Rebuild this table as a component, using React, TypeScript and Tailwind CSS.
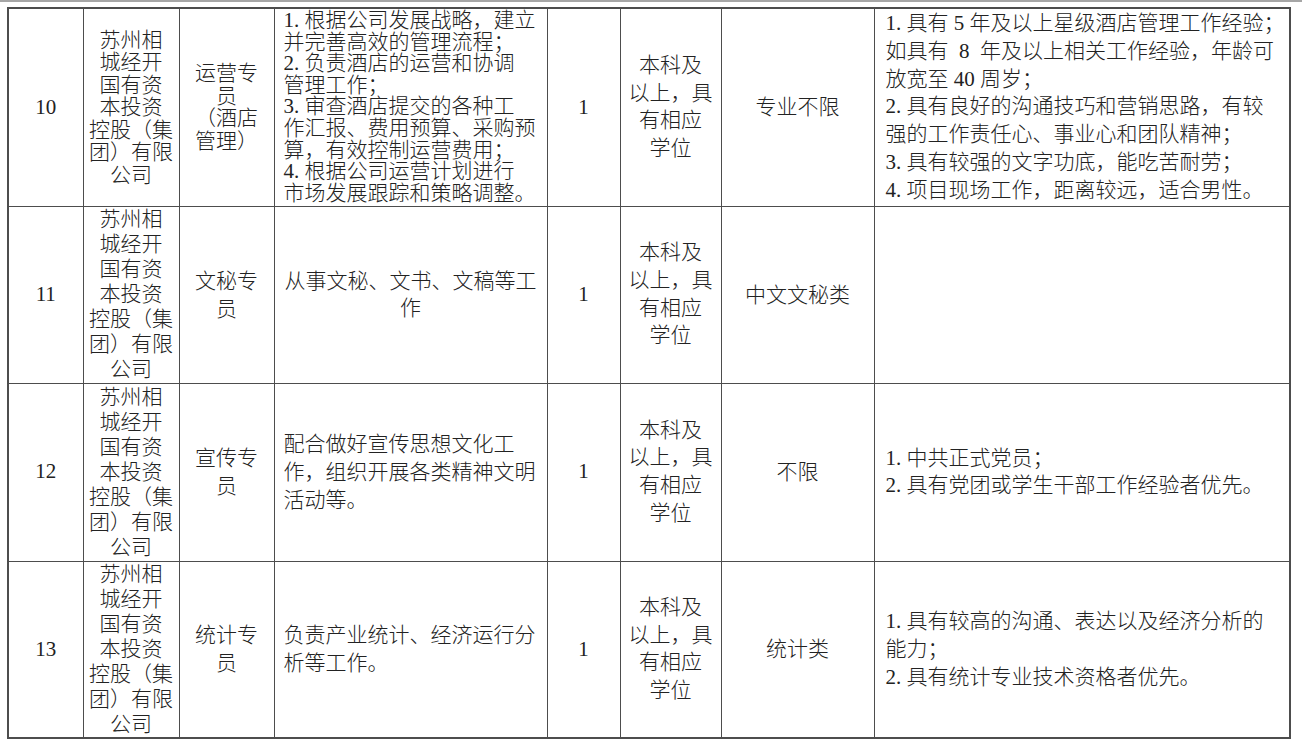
import React from "react";

type Cell = {
  lines: string[];
  lh: string; // line-height class
  align?: "left" | "center";
};

type Row = {
  no: string;
  h: string;
  company: Cell;
  post: Cell;
  duty: Cell;
  edu: Cell;
  major: Cell;
  req: Cell;
};

const COMPANY = ["苏州相", "城经开", "国有资", "本投资", "控股（集", "团）有限", "公司"];
const EDU = ["本科及", "以上，具", "有相应", "学位"];

const ROWS: Row[] = [
  {
    no: "10",
    h: "h-[198px]",
    company: { lines: COMPANY, lh: "leading-[22.5px]" },
    post: { lines: ["运营专", "员", "（酒店", "管理）"], lh: "leading-[22.7px]" },
    duty: {
      lines: [
        "1. 根据公司发展战略，建立",
        "并完善高效的管理流程；",
        "2. 负责酒店的运营和协调",
        "管理工作；",
        "3. 审查酒店提交的各种工",
        "作汇报、费用预算、采购预",
        "算，有效控制运营费用；",
        "4. 根据公司运营计划进行",
        "市场发展跟踪和策略调整。",
      ],
      lh: "leading-[21.6px]",
      align: "left",
    },
    edu: { lines: EDU, lh: "leading-[27.7px]" },
    major: { lines: ["专业不限"], lh: "leading-[28px]" },
    req: {
      lines: [
        "1. 具有 5 年及以上星级酒店管理工作经验；",
        "如具有  8  年及以上相关工作经验，年龄可",
        "放宽至 40 周岁；",
        "2. 具有良好的沟通技巧和营销思路，有较",
        "强的工作责任心、事业心和团队精神；",
        "3. 具有较强的文字功底，能吃苦耐劳；",
        "4. 项目现场工作，距离较远，适合男性。",
      ],
      lh: "leading-[27.7px]",
      align: "left",
    },
  },
  {
    no: "11",
    h: "h-[177px]",
    company: { lines: COMPANY, lh: "leading-[25px]" },
    post: { lines: ["文秘专", "员"], lh: "leading-[28px]" },
    duty: { lines: ["从事文秘、文书、文稿等工", "作"], lh: "leading-[27px]" },
    edu: { lines: EDU, lh: "leading-[27.7px]" },
    major: { lines: ["中文文秘类"], lh: "leading-[28px]" },
    req: { lines: [], lh: "leading-[28px]", align: "left" },
  },
  {
    no: "12",
    h: "h-[178px]",
    company: { lines: COMPANY, lh: "leading-[25px]" },
    post: { lines: ["宣传专", "员"], lh: "leading-[28px]" },
    duty: {
      lines: ["配合做好宣传思想文化工", "作，组织开展各类精神文明", "活动等。"],
      lh: "leading-[28px]",
      align: "left",
    },
    edu: { lines: EDU, lh: "leading-[27.7px]" },
    major: { lines: ["不限"], lh: "leading-[28px]" },
    req: {
      lines: ["1. 中共正式党员；", "2. 具有党团或学生干部工作经验者优先。"],
      lh: "leading-[27.5px]",
      align: "left",
    },
  },
  {
    no: "13",
    h: "h-[177px]",
    company: { lines: COMPANY, lh: "leading-[25px]" },
    post: { lines: ["统计专", "员"], lh: "leading-[28px]" },
    duty: {
      lines: ["负责产业统计、经济运行分", "析等工作。"],
      lh: "leading-[28px]",
      align: "left",
    },
    edu: { lines: EDU, lh: "leading-[27.7px]" },
    major: { lines: ["统计类"], lh: "leading-[28px]" },
    req: {
      lines: ["1. 具有较高的沟通、表达以及经济分析的", "能力；", "2. 具有统计专业技术资格者优先。"],
      lh: "leading-[28px]",
      align: "left",
    },
  },
];

function TextCell({ cell, pad = "px-0" }: { cell: Cell; pad?: string }) {
  return (
    <td
      className={`border border-[#4d4d4d] align-middle ${pad} ${cell.lh} ${
        cell.align === "left" ? "text-left" : "text-center"
      }`}
    >
      {cell.lines.map((l, i) => (
        <div key={i} className="whitespace-pre">
          {l}
        </div>
      ))}
    </td>
  );
}

export default function App() {
  return (
    <div
      className="min-h-[747px] w-[1302px] bg-white text-[21px] font-light text-[#222]"
      style={{ fontFamily: "'Liberation Serif', 'Noto Sans CJK SC', serif" }}
    >
      <div className="h-[2px] w-full bg-[#a6a6a6]" />
      <table className="ml-[7px] mt-[5px] w-[1282px] table-fixed border-collapse border-2 border-[#4d4d4d]">
        <colgroup>
          <col className="w-[75px]" />
          <col className="w-[96px]" />
          <col className="w-[95px]" />
          <col className="w-[273px]" />
          <col className="w-[73px]" />
          <col className="w-[101px]" />
          <col className="w-[153px]" />
          <col className="w-[416px]" />
        </colgroup>
        <tbody>
          {ROWS.map((r) => (
            <tr key={r.no} className={r.h}>
              <td className="border border-[#4d4d4d] text-center align-middle">{r.no}</td>
              <TextCell cell={r.company} />
              <TextCell cell={r.post} />
              <TextCell cell={r.duty} pad="px-[9px]" />
              <td className="border border-[#4d4d4d] text-center align-middle">1</td>
              <TextCell cell={r.edu} />
              <TextCell cell={r.major} />
              <TextCell cell={r.req} pad="pl-[11px] pr-0" />
            </tr>
          ))}
        </tbody>
      </table>
    </div>
  );
}
